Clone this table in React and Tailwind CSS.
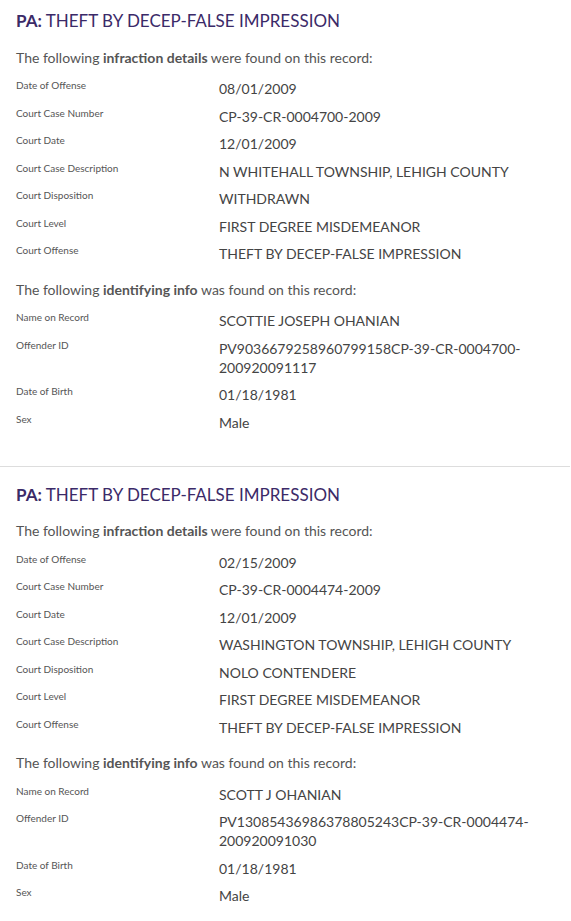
const records = [
  {
    title: "THEFT BY DECEP-FALSE IMPRESSION",
    infraction: [
      ["Date of Offense", "08/01/2009"],
      ["Court Case Number", "CP-39-CR-0004700-2009"],
      ["Court Date", "12/01/2009"],
      ["Court Case Description", "N WHITEHALL TOWNSHIP, LEHIGH COUNTY"],
      ["Court Disposition", "WITHDRAWN"],
      ["Court Level", "FIRST DEGREE MISDEMEANOR"],
      ["Court Offense", "THEFT BY DECEP-FALSE IMPRESSION"],
    ],
    identity: [
      ["Name on Record", "SCOTTIE JOSEPH OHANIAN"],
      ["Offender ID", "PV9036679258960799158CP-39-CR-0004700-200920091117"],
      ["Date of Birth", "01/18/1981"],
      ["Sex", "Male"],
    ],
  },
  {
    title: "THEFT BY DECEP-FALSE IMPRESSION",
    infraction: [
      ["Date of Offense", "02/15/2009"],
      ["Court Case Number", "CP-39-CR-0004474-2009"],
      ["Court Date", "12/01/2009"],
      ["Court Case Description", "WASHINGTON TOWNSHIP, LEHIGH COUNTY"],
      ["Court Disposition", "NOLO CONTENDERE"],
      ["Court Level", "FIRST DEGREE MISDEMEANOR"],
      ["Court Offense", "THEFT BY DECEP-FALSE IMPRESSION"],
    ],
    identity: [
      ["Name on Record", "SCOTT J OHANIAN"],
      ["Offender ID", "PV13085436986378805243CP-39-CR-0004474-200920091030"],
      ["Date of Birth", "01/18/1981"],
      ["Sex", "Male"],
    ],
  },
];

const Rows = ({ rows }) => (
  <div className="mt-[12.5px] flex flex-col gap-[8.5px]">
    {rows.map(([label, value]) => (
      <div key={label} className="grid grid-cols-[203px_1fr]">
        <div className="text-[10px] leading-[13px] text-[#555]">{label}</div>
        <div className="text-[14px] leading-[19px] text-[#444] break-words">
          {value.startsWith("PV") ? (
            <>
              {value.slice(0, value.indexOf("-", value.indexOf("CR-") + 3) + 1)}
              <br />
              {value.slice(value.indexOf("-", value.indexOf("CR-") + 3) + 1)}
            </>
          ) : (
            value
          )}
        </div>
      </div>
    ))}
  </div>
);

const Record = ({ record }) => (
  <section className="pl-4 pr-4 pt-[10px] pb-[34px]">
    <h2 className="text-[17px] leading-[22px] text-[#3b2a68]">
      <span className="font-bold">PA:</span> {record.title}
    </h2>
    <p className="mt-[16.5px] text-[14px] leading-[18px] text-[#555]">
      The following <span className="font-bold">infraction details</span> were found on this record:
    </p>
    <Rows rows={record.infraction} />
    <p className="mt-[17.5px] text-[14px] leading-[18px] text-[#555]">
      The following <span className="font-bold">identifying info</span> was found on this record:
    </p>
    <Rows rows={record.identity} />
  </section>
);

export default function App() {
  return (
    <div className="w-[571px] bg-white font-['Lato',sans-serif]">
      {records.map((record, i) => (
        <div key={i}>
          {i > 0 && <div className="h-px bg-[#ddd] mr-px mb-[7px]" />}
          <Record record={record} />
        </div>
      ))}
    </div>
  );
}
